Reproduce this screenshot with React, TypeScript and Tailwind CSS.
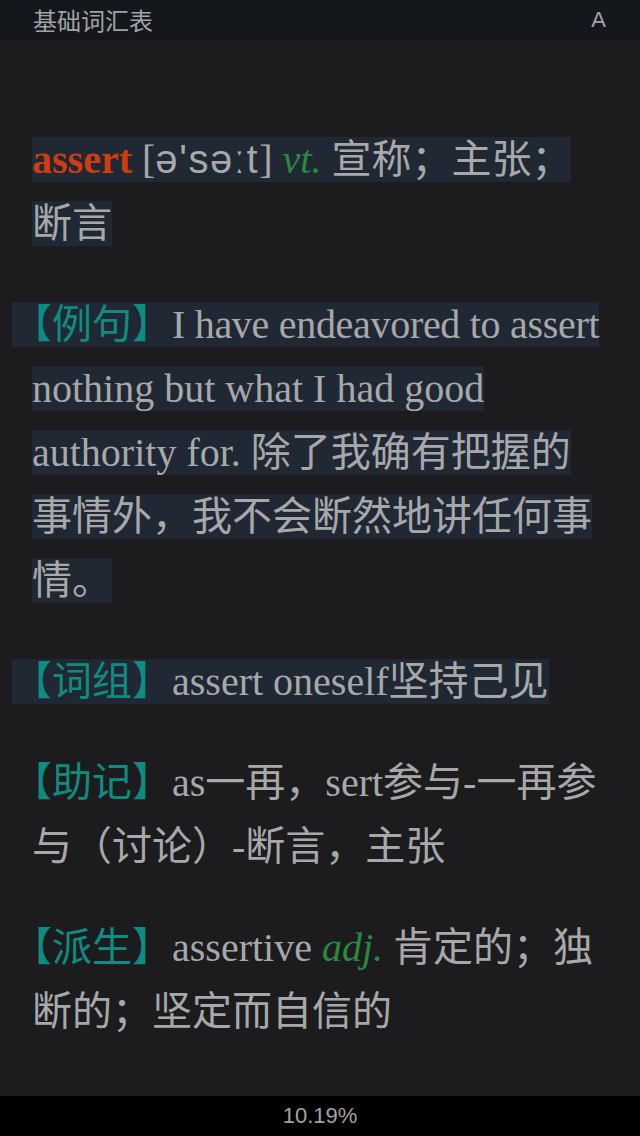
import React from "react";

const hl = "bg-[#1f2833]";
const serif = "font-['Liberation_Serif','Noto_Sans_CJK_SC',serif]";

function Tag({ children }: { children: React.ReactNode }) {
  return <span className="text-[#0e8c82]">【{children}】</span>;
}

export default function App() {
  return (
    <div className="flex h-[1136px] w-[640px] flex-col overflow-hidden bg-[#1c1c1e] font-['Noto_Sans_CJK_SC',sans-serif]">
      <header className="flex h-10 shrink-0 items-center justify-between bg-[#14181c] pl-[33px] pr-[34px] text-[24px] text-[#a3a3a6]">
        <span className="leading-none">基础词汇表</span>
        <span className="font-['Liberation_Sans',sans-serif] text-[22px] leading-none">A</span>
      </header>

      <main className={`flex-1 px-8 pt-[87px] text-[40px] leading-[64px] text-[#a8a8ab] ${serif}`}>
        <p className="mb-[37px]">
          <span className={hl}>
            <span className="font-bold text-[#cf3c12]">assert</span> [
            <span className="font-['Liberation_Sans',sans-serif] tracking-[1.6px]">ə'səːt</span>]{" "}
            <span className="italic text-[#2a8a3e]">vt.</span> 宣称；主张；断言
          </span>
        </p>

        <p className="mb-[37px] -indent-5">
          <span className={hl}>
            <Tag>例句</Tag>
            <span className="tracking-[-0.3px]">I have endeavored to assert</span> nothing but what I had good authority for. 除了我确有把握的事情外，我不会断然地讲任何事情。
          </span>
        </p>

        <p className="mb-[37px] -indent-5">
          <span className={hl}>
            <Tag>词组</Tag>assert oneself坚持己见
          </span>
        </p>

        <p className="mb-[37px] -indent-5">
          <Tag>助记</Tag>as一再，sert参与-一再参与（讨论）-断言，主张
        </p>

        <p className="-indent-5">
          <Tag>派生</Tag>assertive <span className="italic text-[#2a8a3e]">adj.</span> 肯定的；独断的；坚定而自信的
        </p>
      </main>

      <footer className="flex h-10 shrink-0 items-center justify-center bg-black text-[22px] text-[#a3a3a6]">
        <span className="font-['Liberation_Sans',sans-serif] leading-none">10.19%</span>
      </footer>
    </div>
  );
}
